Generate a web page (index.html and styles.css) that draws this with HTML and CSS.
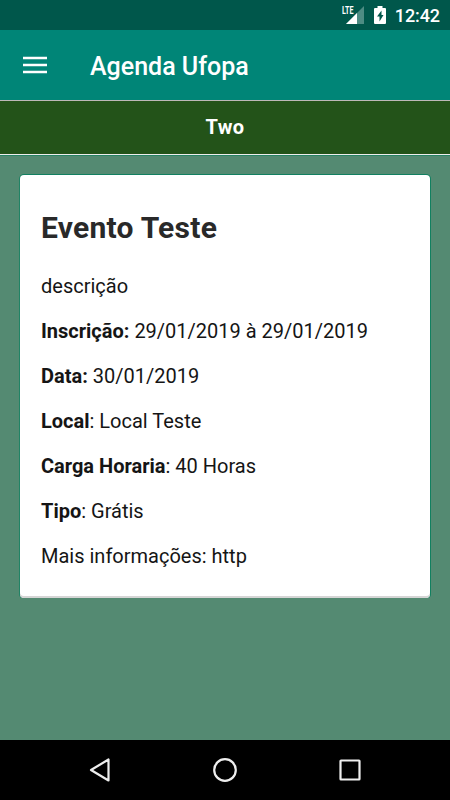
FILE: index.html
```html
<!DOCTYPE html>
<html lang="pt-BR">

<head>
  <meta charset="utf-8">
  <meta name="viewport" content="width=device-width, initial-scale=1">
  <title>Agenda Ufopa</title>
  <link rel="stylesheet" href="styles.css">
</head>

<body>
  <div class="status-bar">
    <svg class="signal" width="24" height="20" viewBox="0 0 24 20">
      <path d="M22 1v18H4z" fill="#4d8c83"/>
      <path d="M15 8v11H4z" fill="#fff"/>
      <path d="M0 0h12.500v9H5l-5 2z" fill="#00574b"/>
      <text x="0" y="9" textLength="11.500" lengthAdjust="spacingAndGlyphs">LTE</text>
    </svg>
    <svg class="battery" width="12" height="18" viewBox="0 0 12 18">
      <path d="M3.500 0h5v2H11q1 0 1 1v14q0 1-1 1H1q-1 0-1-1V3q0-1 1-1h2.500z" fill="#fff"/>
      <path d="M7.500 4.500L3 10.500H5.500V15.500L9.500 9H7.500z" fill="#00574b"/>
    </svg>
    <span class="clock">12:42</span>
  </div>

  <header class="toolbar">
    <svg class="menu" width="24" height="18" viewBox="0 0 24 18">
      <path d="M0 2h24M0 9h24M0 16h24" stroke="#fff" stroke-width="2.600"/>
    </svg>
    <h1>Agenda Ufopa</h1>
  </header>

  <div class="tab">Two</div>

  <main>
    <article class="card">
      <h2>Evento Teste</h2>
      <p>descrição</p>
      <p><b>Inscrição:</b> 29/01/2019 à 29/01/2019</p>
      <p><b>Data:</b> 30/01/2019</p>
      <p><b>Local</b>: Local Teste</p>
      <p><b>Carga Horaria</b>: 40 Horas</p>
      <p><b>Tipo</b>: Grátis</p>
      <p>Mais informações: http</p>
    </article>
  </main>

  <nav class="nav-bar">
    <svg width="26" height="26" viewBox="0 0 26 26"><path d="M21.500 2.500v21L4 13z"/></svg>
    <svg width="26" height="26" viewBox="0 0 26 26"><circle cx="13" cy="13" r="10.800"/></svg>
    <svg width="26" height="26" viewBox="0 0 26 26"><rect x="3.500" y="3.500" width="19" height="19" rx=".5"/></svg>
  </nav>
</body>

</html>
```
FILE: styles.css
```css
* {box-sizing:border-box;}

body {
  margin:0; height:800px;
  display:flex; flex-direction:column;
  background:#548a72; color:#151515;
  font-family:Roboto, sans-serif;
  overflow:hidden;
}

.status-bar {
  flex:none; height:30px;
  display:flex; align-items:flex-start;
  padding:5px 10px 0 342px;
  background:#00574b; color:#fff;
}
.signal {flex:none; overflow:visible;}
.signal text {
  font:bold 11px Roboto, sans-serif;
  fill:#fff;
}
.battery {flex:none; margin:1px 0 0 8px;}
.clock {
  margin-left:auto;
  font-size:18px; font-weight:500;
  line-height:22px;
  letter-spacing:-.1px;
}

.toolbar {
  flex:none; height:70px;
  display:flex; align-items:center;
  padding:3px 23px 0;
  background:#008577; color:#fff;
}
.menu {margin-bottom:4px;}
.toolbar h1 {
  margin:0 0 0 43px;
  font-size:25px; font-weight:500;
  line-height:31px;
}

.tab {
  flex:none; height:55px;
  border-top:1px solid #bdb9b8;
  border-bottom:1px solid #eee;
  background:#235319; color:#fff;
  font-size:20px; font-weight:700;
  line-height:52px; text-align:center;
  letter-spacing:.3px;
}

main {
  flex:1;
  padding:19px 20px;
  border-top:1px solid #278265;
}
.card {
  height:423px;
  padding:33px 21px 0;
  background:#fff; border-radius:4px;
  box-shadow:-1px 0 #218365, 1px 0 #118060, 0 -1px #118060, inset 0 -2px #d5d5d5;
}
.card h2 {
  margin:0 0 23px;
  color:#292929;
  font-size:30px; font-weight:700;
  line-height:40px;
  letter-spacing:.25px;
}
.card p {
  margin:0 0 15px;
  font-size:20px; line-height:30px;
}

.nav-bar {
  flex:none; height:60px;
  display:flex; align-items:center; justify-content:space-between;
  padding:0 87px;
  background:#000;
}
.nav-bar svg {
  fill:none; stroke:#eee;
  stroke-width:2.2; stroke-linejoin:round;
}
```
